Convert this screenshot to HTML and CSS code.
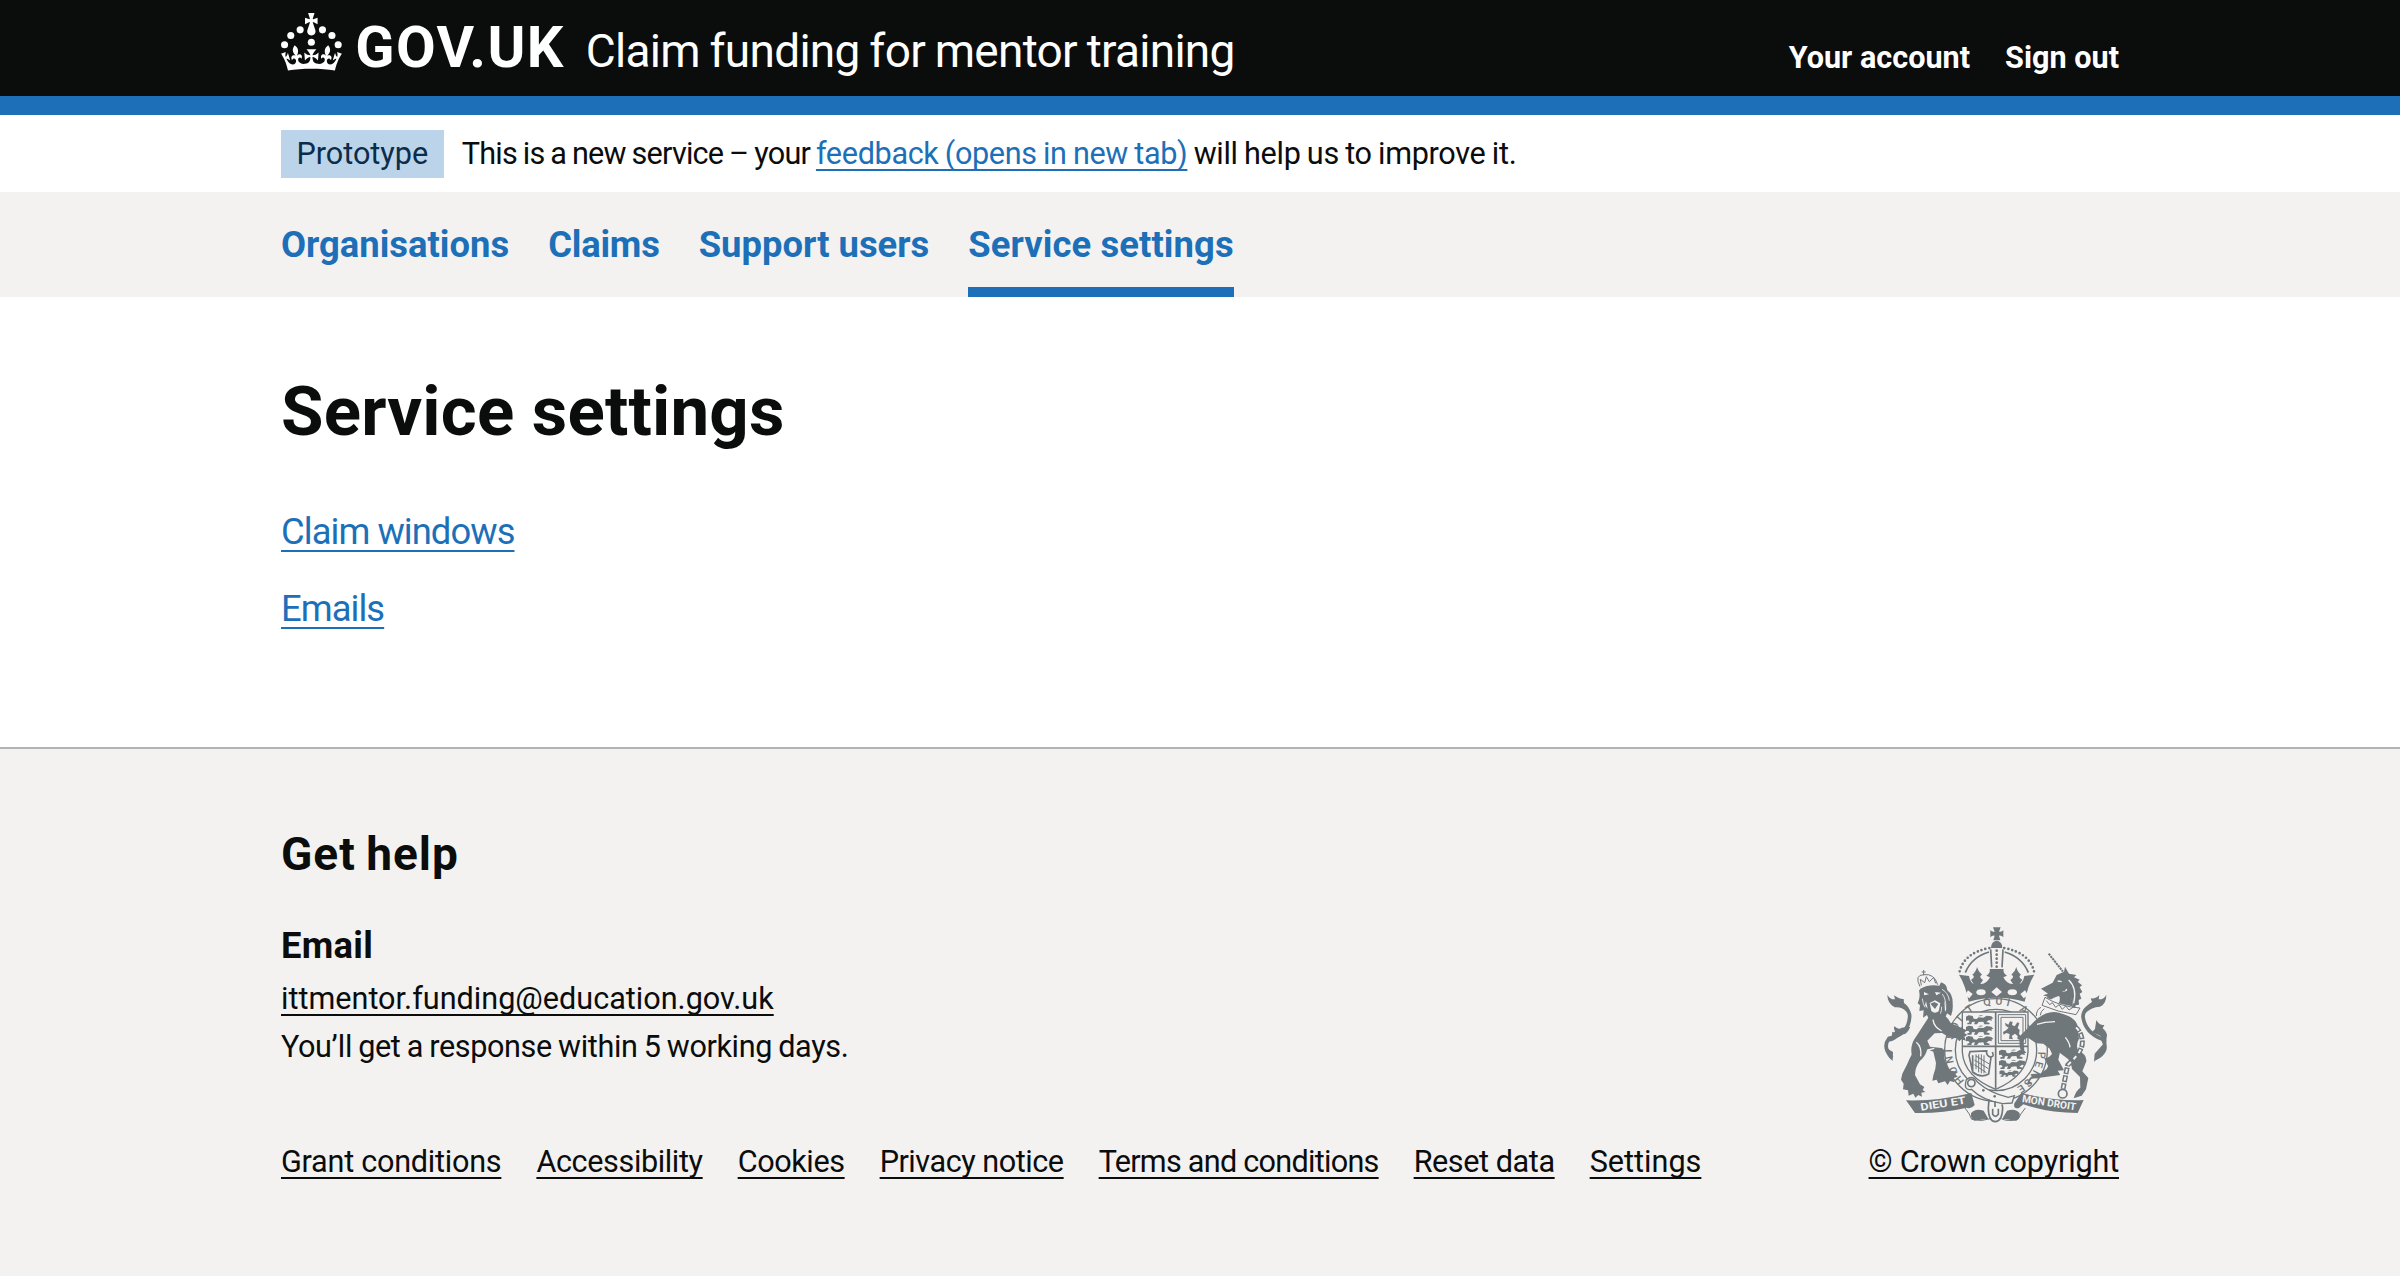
FILE: index.html
```html
<!DOCTYPE html>
<html lang="en">
<head>
<meta charset="utf-8">
<title>Service settings - Claim funding for mentor training - GOV.UK</title>
<link rel="stylesheet" href="styles.css">
</head>
<body>
<header class="header">
  <div class="container header-row">
    <a class="logo" href="#">
      <svg class="crown" viewBox="0 0 64 60" aria-hidden="true"><circle cx="20" cy="17.6" r="3.7"/><circle cx="10.2" cy="23.5" r="3.7"/><circle cx="3.7" cy="33.2" r="3.7"/><circle cx="31.7" cy="30.6" r="3.7"/><circle cx="43.3" cy="17.6" r="3.7"/><circle cx="53.2" cy="23.5" r="3.7"/><circle cx="59.7" cy="33.2" r="3.7"/><path d="M33.1,9.8c.2-.1.3-.3.5-.5l4.6,2.4v-6.8l-4.6,1.5c-.1-.2-.3-.3-.5-.5l1.9-5.9h-6.7l1.9,5.9c-.2.1-.3.3-.5.5l-4.6-1.5v6.8l4.6-2.4c.1.2.3.3.5.5l-2.6,8c-.9,2.8,1.2,5.7,4.1,5.7h0c3,0,5.1-2.9,4.1-5.7l-2.6-8ZM37,37.9s-3.4,3.8-4.1,6.1c2.2,0,4.2-.5,6.4-2.8l-.7,8.5c-2-2.8-4.4-4.1-5.7-3.8.1,3.1.5,6.7,5.8,7.2,3.7.3,6.7-1.5,7-3.8.4-2.6-2-4.3-3.7-1.6-1.4-4.5,2.4-6.1,4.9-3.2-1.9-4.5-1.8-7.7,2.4-10.9,3,4,2.6,7.3-1.2,11.1,2.4-1.3,6.2,0,4,4.6-1.2-2.8-3.7-2.2-4.2.2-.3,1.7.7,3.7,3,4.2,1.9.3,4.7-.9,7-5.9-1.3,0-2.4.7-3.9,1.7l2.4-8c.6,2.3,1.4,3.7,2.2,4.5.6-1.6.5-2.8,0-5.3l5,1.8c-2.6,3.6-5.2,8.7-7.3,17.5-7.4-1.1-15.7-1.7-24.5-1.7h0c-8.8,0-17.1.6-24.5,1.7-2.1-8.9-4.7-13.9-7.3-17.5l5-1.8c-.5,2.5-.6,3.7,0,5.3.8-.8,1.6-2.3,2.2-4.5l2.4,8c-1.5-1-2.6-1.7-3.9-1.7,2.3,5,5.2,6.2,7,5.9,2.3-.4,3.3-2.4,3-4.2-.5-2.4-3-3.1-4.2-.2-2.2-4.6,1.6-6,4-4.6-3.7-3.7-4.2-7.1-1.2-11.1,4.2,3.2,4.3,6.4,2.4,10.9,2.5-2.8,6.3-1.3,4.9,3.2-1.8-2.7-4.1-1-3.7,1.6.3,2.3,3.3,4.1,7,3.8,5.4-.5,5.7-4.2,5.8-7.2-1.3-.2-3.7,1-5.7,3.8l-.7-8.5c2.2,2.3,4.2,2.7,6.4,2.8-.7-2.3-4.1-6.1-4.1-6.1h10.6Z"/></svg>
      <span class="logo-text">GOV.UK</span>
    </a>
    <a class="service-name" href="#">Claim funding for mentor training</a>
    <nav class="account">
      <a class="account-link" href="#">Your account</a>
      <a class="account-link" href="#">Sign out</a>
    </nav>
  </div>
</header>
<div class="brand-bar"></div>
<div class="container phase">
  <strong class="tag">Prototype</strong>
  <p class="phase-text">This is a new service – your <a class="link phase-link" href="#">feedback (opens in new tab)</a><span class="phase-end"> will help us to improve it.</span></p>
</div>
<nav class="primary">
  <div class="container primary-row">
    <a class="primary-link" href="#">Organisations</a>
    <a class="primary-link nav-claims" href="#">Claims</a>
    <a class="primary-link" href="#">Support users</a>
    <a class="primary-link current" href="#">Service settings</a>
  </div>
</nav>
<main class="container main">
  <h1 class="title">Service settings</h1>
  <p class="item"><a class="link" href="#">Claim windows</a></p>
  <p class="item"><a class="link" href="#">Emails</a></p>
</main>
<footer class="footer">
  <div class="container footer-row">
    <div class="footer-main">
      <h2 class="help-title">Get help</h2>
      <h3 class="help-subtitle">Email</h3>
      <p><a class="footer-link" href="#">ittmentor.funding@education.gov.uk</a></p>
      <p class="response">You’ll get a response within 5 working days.</p>
      <div class="footer-links">
        <a class="footer-link f-grant" href="#">Grant conditions</a>
        <a class="footer-link f-access" href="#">Accessibility</a>
        <a class="footer-link f-cookies" href="#">Cookies</a>
        <a class="footer-link f-privacy" href="#">Privacy notice</a>
        <a class="footer-link f-terms" href="#">Terms and conditions</a>
        <a class="footer-link f-reset" href="#">Reset data</a>
        <a class="footer-link" href="#">Settings</a>
      </div>
    </div>
    <div class="copyright">
      <svg class="arms" viewBox="60 45 690 600" aria-hidden="true">
        <defs>
          <path id="garter-left" d="M311 512A132 132 0 0 1 311 327"/>
          <path id="garter-top" d="M316 318A136 136 0 0 1 496 318"/>
          <g id="passant"><path d="M2 4l8-4 12 2 3 8 9 1 6-5 14 1 10-6 14 2 6 6-6 2 2 5-9-2-8 6 10 3-1 4H57l-3-8-14 1-5 7h-9l3-8-9 1-2 7H6v-4l7-2-4-6-7 1z"/><path d="M38 3q10-6 15-1"/></g>
        </defs>
        <!-- Imperial crown -->
        <path d="M396 52h23l-5 13q9 2 13-5v22q-5-6-13-5l4 14h-21l4-14q-8-1-13 5V60q5 7 13 5z"/>
        <path d="M390 114q0-20 17-22 17 2 17 22z"/>
        <path class="line" d="M389 118l3 54M426 118l-3 54M384 126Q331 142 313 188M431 126q53 16 71 62"/>
        <path class="dots" d="M296 184Q310 128 386 114M519 184Q505 128 429 114"/>
        <path class="dots" d="M407 122v52"/>
        <path d="M294 194l30 4q4 20 14 24l-8-13q15-8 4-15 12-10 14-23 3 13 15 23-12 7 3 16l-8 12q17 2 29-20l-11-5q13-8 10-20h42q-3 12 10 20l-11 5q12 22 29 20l-8-12q15-9 3-16 12-10 15-23 2 13 14 23-11 7 4 15l-8 13q10-4 14-24l30-4q-19 30-29 81-84-24-168 0-10-51-29-81z"/>
        <g class="cut"><path d="M391 246l16-14 16 14-16 13zM312 255l9-14 14 11-10 13zM501 255l-9-14-14 11 10 13z"/><ellipse cx="360" cy="247" rx="14" ry="9"/><ellipse cx="454" cy="247" rx="14" ry="9"/></g>
        <!-- Garter -->
        <circle class="band" cx="405" cy="420" r="134"/>
        <circle class="ring" cx="405" cy="420" r="154"/>
        <circle class="ring" cx="405" cy="420" r="122"/>
        <g class="motto"><text><textPath href="#garter-left" textLength="200">HONI SOI</textPath></text><text><textPath href="#garter-top" startOffset="10" textLength="180">T QUI A</textPath></text></g>
        <g class="motto"><text transform="translate(531 425) rotate(92)">P</text><text transform="translate(526 452) rotate(106)">E</text><text transform="translate(518 478) rotate(118)">N</text><text transform="translate(500 504) rotate(134)">S</text><text transform="translate(482 522) rotate(146)">E</text></g>
        <!-- Quartered shield -->
        <path class="shield" d="M304 306h197v120q-4 72-97 112-95-38-100-112z"/>
        <path class="line" d="M404 306v230M305 409h196"/>
        <use href="#passant" x="313" y="316"/><use href="#passant" x="313" y="347"/><use href="#passant" x="313" y="378"/>
        <use href="#passant" x="412" y="419"/><use href="#passant" x="412" y="450"/><use href="#passant" transform="translate(414 481) scale(.72)"/>
        <path class="fine" d="M412 314h82v86h-82zM420 322h66v70h-66z"/>
        <path d="M432 338l10 6 5-10 8 2-2 9 8 4 8-12 6 3-5 14 6 6-2 12 8 9-4 9-9-3 1-9-8-7-10 7 4 10-12-2 2-14-10-3-8 5-2-8 9-5 8-8-9-6z"/>
        <path class="line" d="M327 425l50-2q-3 14 13 19l-7 50q-24 14-48-6l-11-50zM335 436v46M389 440q12 2 5-14"/>
        <path class="fine" d="M345 433v45M353 433v54M361 433v57M369 436v54M340 450l42 26M340 464l36 24M345 438l40 24"/>
        <!-- Lion -->
        <path class="fine" d="M177 230q-18-36 12-36 31-4 41 30M188 180v16M182 186h12M181 226l-3-18 13 10 5-18 9 15 13-13 6 18"/>
        <path d="M178 236q25-14 57-9l5-10q18 5 19 24 17 13 16 40 2 20-5 37l-12-8-5 13-12-10-8 18-11-14-16 16-8-18-12 8 2-22-13 2 2-17-7-6q9-18 4-38z"/>
        <path class="cut" d="M189 246l15 7-15 3zM222 246l18 2-14 8zM206 279l16-8 16 9-5 24q-12 9-22-1zM250 270l6 28-4 8zM195 274l5 22-8-10z"/>
        <path class="mane" d="M243 238q19 10 22 34M244 252q12 16 10 42M184 266q2 16 8 26M242 290q0 12-4 22"/>
        <path d="M208 281l12-5 12 6-10 15z"/>
        <path d="M205 319l30-10q22 6 34 30l48 22-7 8 9 6-9 5 5 12-14-4-6 6-8-9-20-2-24-14-22 1-22 22 8 18 34 4q15 4 9 30 6 24 20 38l22 3-9 7 7 8-14 5 5 12-14-4-7 12-8-11-20 6-5-11-13 3 3-16 6-20 2-17-8-34-18-7q-7 24-22 34-15 20-15 43l15 28 13 8-5 9 8 6-12 2 2 12-11-5-9 8-6-12-14 6-2-16-15-3 2-17-8-12 4-18 13-25q10-24 15-32-5-30 12-52z"/>
        <path class="cutline" d="M166 397q17 14 13 42M201 420l19-5M216 329q3 23 26 34"/>
        <path class="tail" d="M93 444q-30-32-9-59 60-12 62-66Q146 291 96 280"/>
        <path d="M79 254q8 15 23 14l-3-12q16 12 29 11l1 12q14 9 19 27-23-16-47-14-22-13-22-38zM148 350q-8 19-19 23l-12-2q-10 22-35 24 14-17 11-30 8 5 9-2-5-8-2-14 13 12 22 4zM76 390q-5 25 20 36l-1 27q-26-22-20-63z"/>
        <!-- Unicorn -->
        <path class="horn" d="M563 131l43 54"/>
        <path d="M540 236l35-18 12-23 22-10 3-15 12 21 22 4-7 7 17 7-6 6 13 11-7 6 8 14-8 5 5 15-8 4 1 14-10 2-2 12-9-5q6-26-14-43l-20 6-20 7q-16 11-28 1l9-4-14-4 15-5z"/>
        <path class="cutline" d="M623 210q26 24 15 70M590 213l12 2M605 244q9 4 12-7"/>
        <path d="M588 247l29-3q21 17 16 45l-40-9q9-16-5-33z"/>
        <path class="collar" d="M552 266q40 29 98 34M548 284q40 22 96 30"/>
        <path class="fine" d="M552 262l-9 24q46 20 102 28l12-20q-60-4-105-32zM556 272l10 12 8-6 10 14 10-8 10 14 10-10 10 12 12-8M540 292q-14 6-14 26M550 296q-12 8-12 20"/>
        <path d="M522 332q36-34 72-24 55 14 56 44l4 34q-10 18-3 34 27 14 25 34l-12 30 18 20-7 34-13 19-24 8q7-24 20-32l-1-32-24-24q-3-25-13-31l-24-18-20 4 10 12-4 25 16 26-50 7-36 4q-11 10-1 15l-14 4q7-26 22-29l35-9q7-27 26-40l-14-31-19-15-21-1-25-17q-13 1-13 14l2 26-4 11q-15-21-9-56z"/>
        <path class="cutline" d="M613 382q13 16 14 30M528 343l24-6 30-2"/>
        <path d="M549 443q14 4 26-14l24-12-7 32 17 32-38 3-35 14q5-14 28-24z"/>
        <path class="tail" d="M704 445q42-21 21-57-53-20-59-68 1-32 48-41"/>
        <path d="M736 254q0 28-19 36-26 0-49 24 5-28 25-38l-4-11q16 2 26-10l-2 13q16 1 23-14zM706 330q9 17 24 15l-5 10q12 11 13 20l-3 23q-16-28-45-28l12-13zM737 390q0 38-38 65l2-24z"/>
        <!-- Chain -->
        <path class="chain" d="M642 350q20 16 22 45t-44 70l-14 72"/>
        <path class="chain-hole" d="M642 350q20 16 22 45t-44 70l-14 72"/>
        <circle class="line" cx="605" cy="551" r="13"/>
        <!-- Buckle and belt -->
        <path class="strap" d="M316 509q20-16 33 7 37 33 93 46l18-5-7 22-28 2q-60-9-94-43-25 5-15-29z"/>
        <circle class="line" cx="331" cy="519" r="11"/><circle cx="367" cy="541" r="4"/><circle cx="401" cy="559" r="4"/>
        <path class="line" d="M384 568l-2 25q0 40 21 42 21-2 22-42l-2-10M395 596v17q8 12 17 0v-17M402 573v18"/>
        <!-- Scrolls -->
        <path d="M135 571q95 3 196-22l10 36q-11 14-24 8-76 18-155 16zM668 570q-87 4-187-21l-21 31q-4 16 13 15l14-12q76 26 163 26z"/>
        <path d="M330 610q12-17 38-8l14 24-42 6q-12-6-10-22zM476 610q-12-17-38-8l-14 24 42 6q12-6 10-22z"/>
        <path class="fine" d="M312 594q15 18 20 34 31 8 56-2M493 594q-15 18-22 34-31 8-50-2"/>
        <text class="scroll" transform="translate(180 602) rotate(-9)" textLength="137" lengthAdjust="spacingAndGlyphs">DIEU ET</text>
        <text class="scroll" transform="translate(482 576) rotate(9)" textLength="163" lengthAdjust="spacingAndGlyphs">MON DROIT</text>
      </svg>
      <a class="footer-link f-crown" href="#">© Crown copyright</a>
    </div>
  </div>
</footer>
</body>
</html>
```
FILE: styles.css
```css
* { box-sizing: border-box; }
body { margin: 0; background: #fff; color: #0b0c0c; font-family: Roboto, "Liberation Sans", sans-serif; font-size: 30.6px; line-height: 48px; }
h1, h2, h3, p { margin: 0; }
a { color: inherit; text-decoration: none; }
.container { width: 1838px; margin: 0 auto; }

.header { height: 96px; background: #0b0c0c; color: #fff; }
.header-row { display: flex; }
.logo { display: flex; padding-top: 13px; }
.crown { width: 61.3px; height: 57.5px; fill: #fff; }
.logo-text { font-size: 57.6px; font-weight: 700; margin: 11px 0 0 13px; letter-spacing: 1.4px; }
.service-name { font-size: 46px; margin-left: 21px; padding-top: 27px; word-spacing: -1px; letter-spacing: -0.72px; }
.account { margin-left: auto; display: flex; gap: 35px; padding-top: 34px; font-weight: 700; }
.brand-bar { height: 19px; background: #1d70b8; }

.phase { height: 77px; display: flex; padding-top: 15px; }
.tag { font-weight: 400; background: #bbd4ea; color: #0c2d4a; padding: 0 15.4px; height: 48px; }
.phase-text { margin-left: 18px; word-spacing: -1px; letter-spacing: -0.77px; }
.phase-link { letter-spacing: -0.34px; }
.phase-end { letter-spacing: -0.3px; }
.link { color: #1d70b8; }
.link, .footer-link { text-decoration: underline; text-decoration-thickness: 2px; text-underline-offset: 5px; text-decoration-skip-ink: none; }

.primary { background: #f3f2f1; }
.primary-row { display: flex; gap: 39px; height: 105px; font-size: 36.4px; font-weight: 700; color: #1d70b8; }
.primary-link { padding-top: 29px; }
.nav-claims { letter-spacing: -0.2px; }
.current { border-bottom: 10px solid #1d70b8; letter-spacing: 0.1px; }

.main { height: 450px; padding-top: 70px; }
.title { font-size: 69px; line-height: 90px; margin-bottom: 51px; letter-spacing: 0.2px; }
.item { font-size: 36.4px; margin-bottom: 29px; letter-spacing: -0.95px; }
.item .link { text-underline-offset: 6px; }

.footer { border-top: 2px solid #b1b4b6; background: #f3f2f1; height: 529px; padding-top: 81px; }
.footer-row { display: flex; justify-content: space-between; }
.help-title { font-size: 46px; letter-spacing: 1px; word-spacing: -2px; }
.help-subtitle { font-size: 36.4px; margin: 44px 0 5px; letter-spacing: 0.3px; }
.response { word-spacing: -1px; letter-spacing: -0.37px; }
.footer-links { display: flex; gap: 35px; margin-top: 67px; }
.f-grant { letter-spacing: -0.25px; }
.f-access { letter-spacing: -0.38px; }
.f-cookies { letter-spacing: -0.4px; }
.f-privacy { letter-spacing: -0.46px; }
.f-terms { letter-spacing: -0.73px; }
.f-reset { letter-spacing: -0.42px; }
.f-crown { letter-spacing: -0.17px; }
.copyright { display: flex; flex-direction: column; margin-top: 95px; }

.arms { width: 230px; height: 200px; margin: 0 0 13px 12px; fill: #6f777b; }
.arms .cut { fill: #f3f2f1; }
.arms .cutline { fill: none; stroke: #f3f2f1; stroke-width: 4; }
.arms .mane { fill: none; stroke: #f3f2f1; stroke-width: 2.5; }
.arms .line { fill: none; stroke: #6f777b; stroke-width: 5; }
.arms .fine { fill: none; stroke: #6f777b; stroke-width: 3; }
.arms .dots { fill: none; stroke: #6f777b; stroke-width: 8; stroke-linecap: round; stroke-dasharray: 0 12; }
.arms .band { fill: none; stroke: #f3f2f1; stroke-width: 36; }
.arms .ring { fill: none; stroke: #6f777b; stroke-width: 4; }
.arms .shield { fill: #f3f2f1; stroke: #6f777b; stroke-width: 4; }
.arms .strap { fill: #f3f2f1; stroke: #6f777b; stroke-width: 4; }
.arms .collar { fill: none; stroke: #f3f2f1; stroke-width: 12; }
.arms .tail { fill: none; stroke: #6f777b; stroke-width: 11; }
.arms .horn { fill: none; stroke: #6f777b; stroke-width: 6; stroke-dasharray: 7 2; }
.arms .chain { fill: none; stroke: #6f777b; stroke-width: 15; stroke-dasharray: 20 4; }
.arms .chain-hole { fill: none; stroke: #f3f2f1; stroke-width: 6; stroke-dasharray: 12 12; stroke-dashoffset: -4; }
.arms .motto { font: 500 32px Roboto, sans-serif; }
.arms .scroll { font: 700 31px Roboto, sans-serif; fill: #f3f2f1; }
```
